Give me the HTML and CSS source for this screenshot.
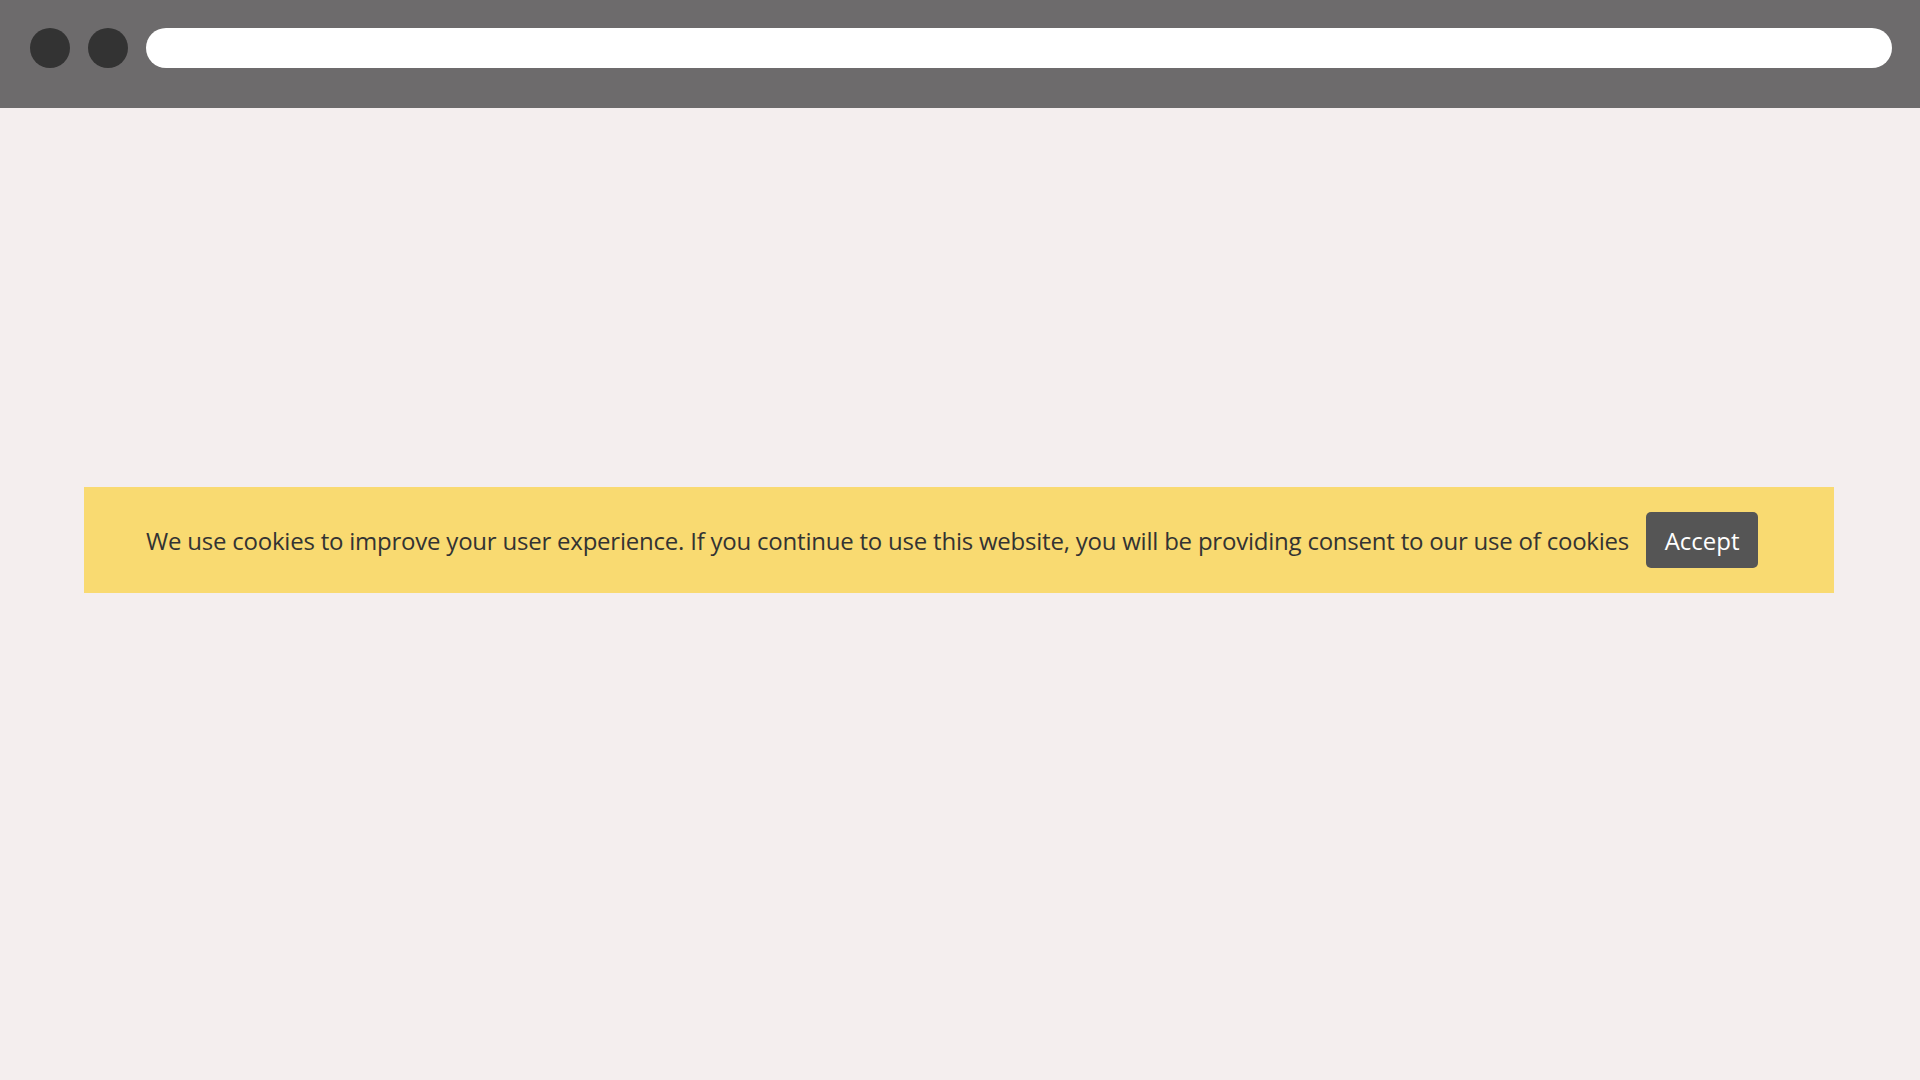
FILE: index.html
```html
<!DOCTYPE html>
<html lang="en">
<head>
  <meta charset="UTF-8">
  <title>Cookie Banner</title>
  <link rel="stylesheet" href="styles.css">
</head>
<body>
  <div class="browser-bar">
    <span class="dot"></span>
    <span class="dot"></span>
    <div class="address"></div>
  </div>

  <main class="page">
    <div class="cookie-banner">
      <p class="cookie-text">We use cookies to improve your user experience. If you continue to use this website, you will be providing consent to our use of cookies</p>
      <button class="accept-btn">Accept</button>
    </div>
  </main>
</body>
</html>
```

FILE: styles.css
```css
html, body {
  margin: 0;
  height: 100%;
}

body {
  font-family: 'Open Sans', 'Noto Sans', sans-serif;
  background: #f4eeee;
  color: #333;
  display: flex;
  flex-direction: column;
}

.browser-bar {
  height: 108px;
  box-sizing: border-box;
  background: #6d6b6c;
  display: flex;
  align-items: flex-start;
  padding: 28px 28px 0 30px;
  gap: 18px;
}

.dot {
  width: 40px;
  height: 40px;
  border-radius: 50%;
  background: #333;
  flex-shrink: 0;
}

.address {
  flex: 1;
  height: 40px;
  border-radius: 20px;
  background: #fff;
}

.page {
  flex: 1;
  padding: 379px 86px 0 84px;
}

.cookie-banner {
  background: #f9da71;
  height: 106px;
  display: flex;
  align-items: center;
  padding-left: 62px;
  gap: 17px;
}

.cookie-text {
  margin: 0;
  font-size: 24px;
  letter-spacing: -0.22px;
  white-space: nowrap;
  color: #333;
}

.accept-btn {
  width: 112px;
  height: 56px;
  border: none;
  border-radius: 5px;
  background: #555;
  color: #fff;
  font-family: inherit;
  font-size: 24px;
  cursor: pointer;
}
```
